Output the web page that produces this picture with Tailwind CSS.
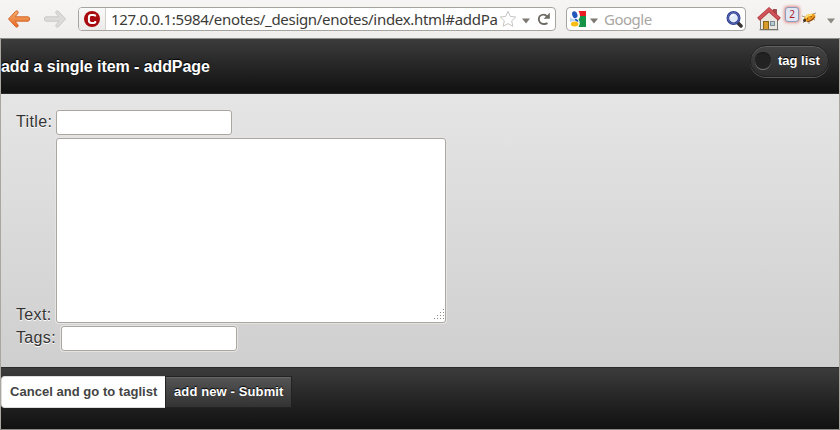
<!DOCTYPE html>
<html lang="en">
<head>
<meta charset="utf-8">
<title>addPage</title>
<script src="https://cdn.jsdelivr.net/npm/@tailwindcss/browser@4"></script>
</head>
<body class="w-[840px] h-[430px] overflow-hidden bg-[#f2f1f0] font-['Liberation_Sans',Arial,sans-serif]">
<div class="flex flex-col w-[840px] h-[430px] border-b border-[#8c8a86]">
  <nav class="flex h-[39px] shrink-0 items-start border-b border-[#8b8e88] bg-linear-to-b from-[#f6f5f4] to-[#efeeec] pt-[7px] pl-[7px] font-['Noto_Sans',sans-serif]">
    <svg class="mt-[2px] w-6 h-5 shrink-0" viewBox="0 0 24 20">
      <defs><linearGradient id="o" x1="0" y1="0" x2="0" y2="1"><stop offset="0" stop-color="#f3b071"/><stop offset="1" stop-color="#e8681f"/></linearGradient></defs>
      <path d="M1.5 10 8.7 2.2Q10.6 1 11.3 3.2 11.4 4.2 8 7.8H21Q22.6 8 22.6 10T21 12.2H8Q11.4 15.8 11.3 16.8 10.6 19 8.7 17.8Z" fill="url(#o)" stroke="#d5672c" stroke-linejoin="round"/>
    </svg>
    <svg class="mt-[2px] ml-3 w-6 h-5 shrink-0" viewBox="0 0 24 20">
      <path d="M22.5 10 15.3 2.2Q13.4 1 12.7 3.2 12.6 4.2 16 7.8H3Q1.4 8 1.4 10T3 12.2H16Q12.6 15.8 12.7 16.8 13.4 19 15.3 17.8Z" fill="#dddbd9" stroke="#cbc8c5" stroke-linejoin="round"/>
    </svg>
    <div class="ml-[11px] flex h-6 w-[478px] shrink-0 overflow-hidden rounded-[4px] border border-[#a6a49f] bg-white">
      <div class="flex w-[27px] shrink-0 justify-center border-r border-[#d4d1cd] bg-linear-to-b from-[#fafafa] to-[#ebeae8] pt-[3px]">
        <svg class="size-4" viewBox="0 0 16 16"><circle cx="8" cy="8" r="8" fill="#a80b0e"/><path d="M11.2 5.6V4.6Q10.8 4 9.5 4H7.4Q4.9 4 4.9 6.4V9.6Q4.9 12 7.4 12H9.5Q10.8 12 11.2 11.2V10" fill="none" stroke="#fff" stroke-width="2"/></svg>
      </div>
      <div class="w-[391px] shrink-0 whitespace-nowrap pl-[5px] text-[15px] leading-[23px] tracking-[-0.31px] text-[#3c3b37]">127.0.0.1:5984/enotes/_design/enotes/index.html#addPa</div>
      <svg class="ml-[2px] mt-[2px] size-[18px] shrink-0" viewBox="0 0 18 18"><path d="M9 1.3 11.3 6.4 16.8 7 12.7 10.8 13.8 16.3 9 13.6 4.2 16.3 5.3 10.8 1.2 7 6.7 6.4Z" fill="#fefefe" stroke="#c7c5c2"/></svg>
      <svg class="ml-[5px] mt-[10px] h-[6px] w-2 shrink-0" viewBox="0 0 8 6"><path d="M0 .5H8L4 5.5Z" fill="#7c7973"/></svg>
      <svg class="ml-[7px] mt-[4px] size-[14px] shrink-0" viewBox="0 0 14 14"><path d="M10.5 11.1Q8.5 12.3 6.5 12A4.7 4.7 0 0 1 6.5 2.6Q8.5 2.5 10 4.5" fill="none" stroke="#6f6b65" stroke-width="1.9"/><path d="M12.8 .8V6.8H6.6Z" fill="#6f6b65"/></svg>
    </div>
    <div class="ml-[10px] flex h-6 w-[180px] shrink-0 rounded-[4px] border border-[#a6a49f] bg-white">
      <svg class="ml-[3px] mt-[3px] size-4 shrink-0" viewBox="0 0 16 16"><path d="M0 0H16V16H0Z" fill="#fff"/><path d="M8.5 0H16V5H10Q10 2 8.5 0Z" fill="#ec1c24"/><path d="M10 5H16V16H8.5Q11 12 8.5 8.5Q10 7 10 5Z" fill="#169548"/><ellipse cx="4.8" cy="3.7" rx="2.6" ry="3.5" transform="rotate(-18 4.8 3.7)" fill="#2258bd"/><path d="M0 5.5Q1 8.3 4.5 8.2L5 10Q2 10.2 0 11Z" fill="#b8d1f5"/><path d="M4.8 7.8Q8.5 8.2 8.3 11L5.5 10Z" fill="#2258bd"/><ellipse cx="4.7" cy="13.1" rx="3.8" ry="2.5" fill="#f8bd16"/></svg>
      <svg class="ml-1 mt-[10px] h-[6px] w-2 shrink-0" viewBox="0 0 8 6"><path d="M0 .5H8L4 5.5Z" fill="#7c7973"/></svg>
      <div class="ml-[6px] w-[122px] text-[15px] leading-[23px] tracking-[-0.5px] text-[#a9a7a3]">Google</div>
      <svg class="mt-[3px] size-[17px] shrink-0" viewBox="0 0 17 17"><path d="M11.5 11.5 15 15" stroke="#383332" stroke-width="3.5" stroke-linecap="round"/><circle cx="7.5" cy="7" r="5.7" fill="#e3ebfa" stroke="#303d8e" stroke-width="2.6"/><circle cx="7.5" cy="7" r="5.6" fill="none" stroke="#6680ca" stroke-width=".7"/><path d="M5 6Q5.7 4 8 4" fill="none" stroke="#fff" stroke-width="1.5"/></svg>
    </div>
    <svg class="ml-[11px] size-6 shrink-0" viewBox="0 0 24 24"><path d="M16 2.5H19.5V9H16Z" fill="#a74949" stroke="#873333" stroke-width=".7"/><path d="M3.5 11 12 4 20.5 11V22.5H3.5Z" fill="#e9e6df" stroke="#77756f"/><path d="M1.5 12.2 12 2.8 22.5 12.2" fill="none" stroke="#ad3038" stroke-width="4"/><path d="M2 11.7 12 2.6 22 11.7" fill="none" stroke="#d0555a" stroke-width="2.6"/><rect x="6.5" y="14.5" width="5" height="8" fill="#d59a2b" stroke="#8b641a"/><rect x="13.5" y="14.5" width="4" height="4" fill="#b7cad3" stroke="#7f8d93"/><path d="M2.5 22.8H21.5" stroke="#77756f"/></svg>
    <div class="ml-[4px] flex h-[15px] w-[14px] shrink-0 items-center justify-center rounded-[3px] border border-[#8d9cb7] bg-[#e0e6f2] text-[10px] text-[#b11c2c] shadow-[0_0_3px_1px_#e2938f]">2</div>
    <svg class="ml-[2px] mt-[4px] h-[14px] w-4 shrink-0" viewBox="0 0 16 14"><g stroke="#77705f" stroke-width=".7"><path d="M4 6 1 5M4 10 2 12M8 10V13M12 8 14 9M12 3 15 2"/></g><g transform="rotate(-22 8 7)"><ellipse cx="8.8" cy="7" rx="6" ry="3.6" fill="#ed9d20"/><path d="M5 9.8Q9 11 13.8 8" stroke="#8a3d14" stroke-width="1.2" fill="none"/><path d="M6 7.3h1M10 6.6h1" stroke="#68350f" stroke-width="1.2"/><path d="M5 5.4Q8 3.4 12 5.2" stroke="#ffdf75" fill="none" stroke-width="1.8"/><circle cx="3" cy="7.6" r="1.6" fill="#443626"/></g></svg>
    <svg class="ml-[10px] mt-[11px] h-[6px] w-2 shrink-0" viewBox="0 0 8 6"><path d="M0 .5H8L4 5.5Z" fill="#8b8882"/></svg>
  </nav>
  <div class="flex flex-1 flex-col border-x border-l-[#aaa6a0] border-r-[#aaa6a0]">
    <header class="flex h-[55px] shrink-0 justify-between border-b border-[#2a2a2a] bg-linear-to-b from-[#3c3c3c] to-[#111]">
      <h1 class="mt-[18px] text-[16px] leading-5 font-bold tracking-[-0.07px] text-white [text-shadow:0_-1px_1px_#000]">add a single item - addPage</h1>
      <a class="mt-[6px] mr-[10px] flex h-[32px] w-[79px] items-center rounded-full border border-[#222] bg-linear-to-b from-[#444] to-[#2d2d2d] pl-[4px] text-[13px] font-bold text-white shadow-[inset_0_1px_0_#606060,0_1px_0_#555] [text-shadow:0_-1px_1px_#000]"><span class="mr-[7px] size-4 shrink-0 rounded-full bg-[#222] shadow-[0_1px_0_#777,0_-1px_0_#171717]"></span><span class="whitespace-nowrap">tag list</span></a>
    </header>
    <main class="h-[273px] shrink-0 bg-linear-to-b from-[#e5e5e5] to-[#cfcfcf] px-[15px] pt-[15px] text-[16px] tracking-[0.35px] text-[#333] [text-shadow:0_1px_0_#fff]">
      <div class="flex h-[29px] items-start"><label class="w-10 shrink-0 leading-[25px]">Title:</label><div class="mt-px h-[25px] w-[176px] rounded-[3px] border border-[#aaa6a0] bg-white shadow-[0_0_0_1px_#e5e4e3]"></div></div>
      <div class="flex h-[187px] items-start"><label class="mt-[166px] w-10 shrink-0 leading-[22px]">Text:</label>
        <div class="flex h-[185px] w-[390px] items-end justify-end rounded-[3px] border border-[#aaa6a0] bg-white pr-px pb-[2px] shadow-[0_0_0_1px_#e5e4e3]"><svg class="size-[11px]" viewBox="0 0 11 11" fill="#8d8a84" shape-rendering="crispEdges"><path d="M10 0h1v1h-1zM7 3h1v1H7zM10 3h1v1h-1zM4 6h1v1H4zM7 6h1v1H7zM10 6h1v1h-1zM1 9h1v1H1zM4 9h1v1H4zM7 9h1v1H7zM10 9h1v1h-1z"/></svg></div></div>
      <div class="flex items-start"><label class="w-[45px] shrink-0 leading-[25px]">Tags:</label><div class="mt-px h-[25px] w-[176px] rounded-[3px] border border-[#aaa6a0] bg-white shadow-[0_0_0_1px_#e5e4e3]"></div></div>
    </main>
    <footer class="flex flex-1 items-start border-t border-[#2a2a2a] bg-linear-to-b from-[#3c3c3c] to-[#111] pt-[8px] text-[13px] leading-[30px] font-bold">
      <a class="h-8 w-[164px] rounded-l-[4px] border border-r-0 border-[#ddd] bg-white pl-2 tracking-[0.03px] whitespace-nowrap text-[#444]">Cancel and go to taglist</a>
      <a class="h-8 w-[127px] border border-[#222] bg-linear-to-b from-[#555] to-[#333] pl-2 tracking-[0.12px] whitespace-nowrap text-white shadow-[inset_0_1px_0_#666] [text-shadow:0_-1px_1px_#000]">add new - Submit</a>
    </footer>
  </div>
</div>
</body>
</html>
